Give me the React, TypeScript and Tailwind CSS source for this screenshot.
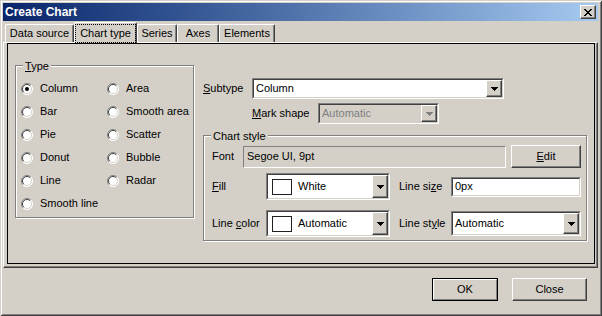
import React from "react";

const face = "font-['Liberation_Sans',Arial,sans-serif]";

// classic 3d pieces
const sunken = "border border-t-[#808080] border-l-[#808080] border-b-white border-r-white";
const sunkenInner = "border border-t-[#404040] border-l-[#404040] border-b-[#d4d0c8] border-r-[#d4d0c8]";
const raised =
  "border border-t-white border-l-white border-b-[#404040] border-r-[#404040] shadow-[inset_-1px_-1px_#808080] bg-[#d4d0c8]";

function Arrow({ disabled = false }: { disabled?: boolean }) {
  const c = disabled ? "#808080" : "#000";
  return (
    <svg width="7" height="4" viewBox="0 0 7 4" shapeRendering="crispEdges">
      <rect x="0" y="0" width="7" height="1" fill={c} />
      <rect x="1" y="1" width="5" height="1" fill={c} />
      <rect x="2" y="2" width="3" height="1" fill={c} />
      <rect x="3" y="3" width="1" height="1" fill={c} />
    </svg>
  );
}

function Radio({ label, checked = false }: { label: string; checked?: boolean }) {
  return (
    <div className="flex h-[23px] items-center gap-[7px]">
      <svg width="12" height="12" viewBox="0 0 12 12">
        <circle cx="6" cy="6" r="5.5" fill="#fff" />
        <path d="M9.9 2.1A5.5 5.5 0 0 0 2.1 9.9" stroke="#808080" fill="none" />
        <path d="M9.2 2.8A4.5 4.5 0 0 0 2.8 9.2" stroke="#404040" fill="none" />
        <path d="M2.1 9.9A5.5 5.5 0 0 0 9.9 2.1" stroke="#fff" fill="none" />
        <path d="M2.8 9.2A4.5 4.5 0 0 0 9.2 2.8" stroke="#d4d0c8" fill="none" />
        {checked && <circle cx="6" cy="6" r="2" fill="#000" />}
      </svg>
      <span>{label}</span>
    </div>
  );
}

function Combo({
  size,
  text,
  swatch = false,
  disabled = false,
}: {
  size: string;
  text: string;
  swatch?: boolean;
  disabled?: boolean;
}) {
  return (
    <div className={`flex ${size} ${sunken}`}>
      <div className={`flex flex-1 ${sunkenInner} ${disabled ? "bg-[#d4d0c8]" : "bg-white"}`}>
        <div className={`flex flex-1 items-center pl-[2px] ${disabled ? "text-[#808080]" : ""}`}>
          {swatch && <span className="ml-[2px] mr-[6px] h-[16px] w-[20px] border border-[#202020] bg-white" />}
          {text}
        </div>
        <div className={`flex w-[16px] items-center justify-center ${raised}`}>
          <Arrow disabled={disabled} />
        </div>
      </div>
    </div>
  );
}

function Group({ title, size, children }: { title: React.ReactNode; size: string; children: React.ReactNode }) {
  return (
    <div className={`relative ${size} border border-[#808080] shadow-[inset_1px_1px_#fff,1px_1px_#fff]`}>
      <span className="absolute -top-[6px] left-[7px] bg-[#d4d0c8] px-[2px]">{title}</span>
      {children}
    </div>
  );
}

function Tab({ w, children }: { w: string; children: React.ReactNode }) {
  return (
    <div
      className={`flex h-[18px] ${w} items-center justify-center rounded-t-[2px] border-t border-l border-r border-t-white border-l-white border-r-[#404040] shadow-[inset_-1px_0_#808080]`}
    >
      {children}
    </div>
  );
}

export default function App() {
  return (
    <div
      className={`${face} flex h-[316px] w-[602px] flex-col bg-[#d4d0c8] pt-[3px] pl-[3px] pr-[4px] text-[11px] leading-[13px] text-black shadow-[inset_1px_1px_#d4d0c8,inset_-1px_-1px_#404040,inset_2px_2px_#ffffff,inset_-2px_-2px_#808080]`}
    >
      {/* title bar */}
      <div className="flex h-[18px] items-center justify-between bg-linear-to-r from-[#0a246a] to-[#a6caf0] pl-[2px] pr-[2px]">
        <span className="text-[12px] font-bold text-white">Create Chart</span>
        <div className={`flex h-[14px] w-[16px] items-center justify-center ${raised}`}>
          <svg width="8" height="7" viewBox="0 0 8 7" shapeRendering="crispEdges" fill="#000">
            <rect x="0" y="0" width="2" height="1" />
            <rect x="6" y="0" width="2" height="1" />
            <rect x="1" y="1" width="2" height="1" />
            <rect x="5" y="1" width="2" height="1" />
            <rect x="2" y="2" width="4" height="1" />
            <rect x="3" y="3" width="2" height="1" />
            <rect x="2" y="4" width="4" height="1" />
            <rect x="1" y="5" width="2" height="1" />
            <rect x="5" y="5" width="2" height="1" />
            <rect x="0" y="6" width="2" height="1" />
            <rect x="6" y="6" width="2" height="1" />
          </svg>
        </div>
      </div>

      {/* tabs */}
      <div className="flex h-[21px] items-end pl-[2px]">
        <Tab w="w-[69px]">Data source</Tab>
        <div className="relative top-[1px] z-10 flex h-[21px] w-[63px] items-center justify-center rounded-t-[2px] border-t border-l border-r border-t-white border-l-white border-r-[#404040] bg-[#d4d0c8] shadow-[inset_-1px_0_#808080]">
          <span className="border border-dotted border-black px-[4px] pt-[2px] pb-[2px]">Chart type</span>
        </div>
        <Tab w="w-[40px]">Series</Tab>
        <Tab w="w-[42px]">Axes</Tab>
        <Tab w="w-[56px]">Elements</Tab>
      </div>

      {/* tab page */}
      <div className="flex h-[226px] flex-col border border-t-white border-l-white border-b-[#404040] border-r-[#404040] pl-[3px] pr-[2px] pb-[3px] shadow-[inset_-1px_-1px_#808080]">
        <div className="flex flex-1 border border-black pl-[7px] pt-[21px]">
          <Group
            size="h-[153px] w-[179px]"
            title={
              <>
                <span className="underline">T</span>ype
              </>
            }
          >
            <div className="grid grid-cols-[86px_1fr] pl-[5px] pt-[11px]">
              <Radio label="Column" checked />
              <Radio label="Area" />
              <Radio label="Bar" />
              <Radio label="Smooth area" />
              <Radio label="Pie" />
              <Radio label="Scatter" />
              <Radio label="Donut" />
              <Radio label="Bubble" />
              <Radio label="Line" />
              <Radio label="Radar" />
              <Radio label="Smooth line" />
            </div>
          </Group>

          <div className="ml-[9px] mt-[13px] flex flex-col">
            <div className="flex h-[21px] items-center">
              <span className="w-[49px]">
                <span className="underline">S</span>ubtype
              </span>
              <Combo size="h-[21px] w-[252px]" text="Column" />
            </div>
            <div className="mt-[4px] flex h-[21px] items-center pl-[49px]">
              <span className="w-[66px]">
                <span className="underline">M</span>ark shape
              </span>
              <Combo size="h-[21px] w-[121px]" text="Automatic" disabled />
            </div>

            <div className="mt-[11px]">
              <Group size="h-[106px] w-[384px]" title="Chart style">
                <div className="flex flex-col pl-[8px] pt-[9px]">
                  <div className="flex h-[23px] items-center">
                    <span className="w-[31px]">Font</span>
                    <div className={`flex h-[22px] w-[263px] items-center pl-[3px] ${sunken}`}>Segoe UI, 9pt</div>
                    <div className={`ml-[5px] flex h-[23px] w-[70px] items-center justify-center ${raised}`}>
                      <span>
                        <span className="underline">E</span>dit
                      </span>
                    </div>
                  </div>
                  <div className="mt-[5px] flex h-[27px] items-center">
                    <span className="w-[54px]">
                      <span className="underline">F</span>ill
                    </span>
                    <Combo size="h-[27px] w-[124px]" text="White" swatch />
                    <span className="ml-[9px] w-[52px]">
                      Line si<span className="underline">z</span>e
                    </span>
                    <div className={`flex h-[20px] w-[130px] ${sunken}`}>
                      <div className={`flex flex-1 items-center bg-white pl-[2px] ${sunkenInner}`}>0px</div>
                    </div>
                  </div>
                  <div className="mt-[10px] flex h-[27px] items-center">
                    <span className="w-[54px]">
                      Line <span className="underline">c</span>olor
                    </span>
                    <Combo size="h-[27px] w-[124px]" text="Automatic" swatch />
                    <span className="ml-[9px] w-[52px]">
                      Line st<span className="underline">y</span>le
                    </span>
                    <Combo size="h-[25px] w-[130px]" text="Automatic" />
                  </div>
                </div>
              </Group>
            </div>
          </div>
        </div>
      </div>

      {/* buttons */}
      <div className="mt-[10px] flex justify-end gap-[14px] pr-[11px]">
        <div className="h-[23px] w-[66px] border border-black">
          <div className="flex h-full w-full items-center justify-center border border-t-white border-l-white border-b-[#808080] border-r-[#808080] bg-[#d4d0c8]">
            OK
          </div>
        </div>
        <div className={`flex h-[23px] w-[75px] items-center justify-center ${raised}`}>Close</div>
      </div>
    </div>
  );
}
